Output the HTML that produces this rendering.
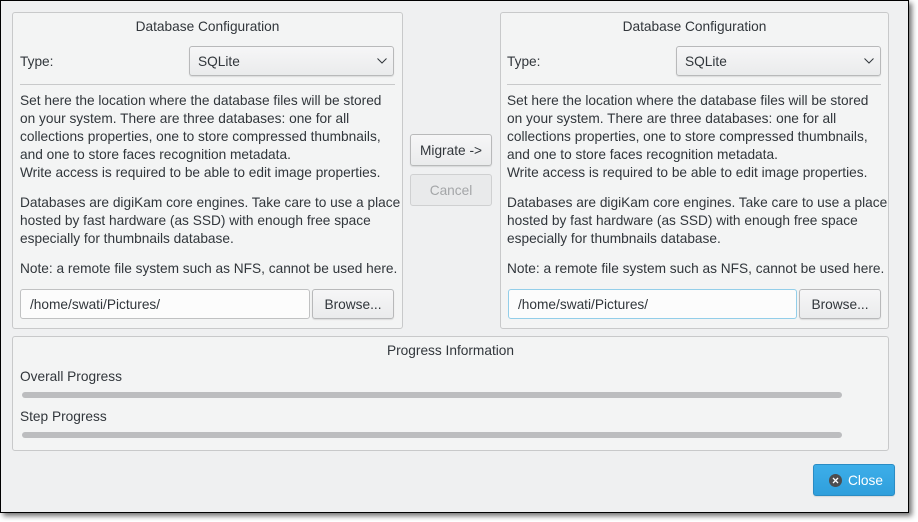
<!DOCTYPE html>
<html><head><meta charset="utf-8"><style>
*{box-sizing:border-box;margin:0;padding:0}
body{width:918px;height:522px;background:#fff;position:relative;overflow:hidden;font-family:"Liberation Sans",sans-serif;font-size:13.7px;color:#31363b}
.win{position:absolute;left:0;top:0;width:909px;height:513px;border:1px solid #000;background:#eff0f1;box-shadow:3px 3px 5px rgba(0,0,0,.55)}
.a{position:absolute;white-space:nowrap}
.grp{position:absolute;border:1px solid #c8c9ca;border-radius:3px;background:#f3f4f4}
.btn{position:absolute;border:1px solid #b8b9ba;border-radius:3px;background:linear-gradient(#f6f6f7,#eaebec);text-align:center;box-shadow:0 1px 1px rgba(0,0,0,.1)}
.inp{position:absolute;background:#fcfcfc;border:1px solid #c0c1c2;border-radius:3px;padding-left:9px}
.bar{position:absolute;height:6px;border-radius:3px;background:#bcbdbf}
</style></head><body>
<div class="win"></div>

<div class="grp" style="left:12px;top:12px;width:391px;height:317px"></div>
<div class="grp" style="left:500px;top:12px;width:389px;height:317px"></div>
<div class="grp" style="left:12px;top:336px;width:877px;height:115px"></div>

<!-- left -->
<div class="a" style="left:12px;width:391px;text-align:center;top:19px">Database Configuration</div>
<div class="a" style="left:20px;top:54px">Type:</div>
<div class="btn" style="left:189px;top:46px;width:205px;height:30px;text-align:left;padding:7px 0 0 8px">SQLite<svg style="position:absolute;right:6px;top:11px" width="10" height="6"><path d="M0.5 0.5L5 5L9.5 0.5" fill="none" stroke="#31363b"/></svg></div>
<div style="position:absolute;left:20px;top:84px;width:375px;height:1px;background:#c8c9ca"></div>
<div class="a" style="left:20px;top:92px;line-height:18px">Set here the location where the database files will be stored<br>on your system. There are three databases: one for all<br>collections properties, one to store compressed thumbnails,<br>and one to store faces recognition metadata.<br>Write access is required to be able to edit image properties.</div>
<div class="a" style="left:20px;top:194px;line-height:18px">Databases are digiKam core engines. Take care to use a place<br>hosted by fast hardware (as SSD) with enough free space<br>especially for thumbnails database.</div>
<div class="a" style="left:20px;top:260px;line-height:18px">Note: a remote file system such as NFS, cannot be used here.</div>
<div class="inp" style="left:20px;top:289px;width:290px;height:30px;padding-top:7px">/home/swati/Pictures/</div>
<div class="btn" style="left:312px;top:289px;width:82px;height:30px;padding-top:7px">Browse...</div>

<!-- right -->
<div class="a" style="left:500px;width:389px;text-align:center;top:19px">Database Configuration</div>
<div class="a" style="left:507px;top:54px">Type:</div>
<div class="btn" style="left:676px;top:46px;width:205px;height:30px;text-align:left;padding:7px 0 0 8px">SQLite<svg style="position:absolute;right:6px;top:11px" width="10" height="6"><path d="M0.5 0.5L5 5L9.5 0.5" fill="none" stroke="#31363b"/></svg></div>
<div style="position:absolute;left:507px;top:84px;width:374px;height:1px;background:#c8c9ca"></div>
<div class="a" style="left:507px;top:92px;line-height:18px">Set here the location where the database files will be stored<br>on your system. There are three databases: one for all<br>collections properties, one to store compressed thumbnails,<br>and one to store faces recognition metadata.<br>Write access is required to be able to edit image properties.</div>
<div class="a" style="left:507px;top:194px;line-height:18px">Databases are digiKam core engines. Take care to use a place<br>hosted by fast hardware (as SSD) with enough free space<br>especially for thumbnails database.</div>
<div class="a" style="left:507px;top:260px;line-height:18px">Note: a remote file system such as NFS, cannot be used here.</div>
<div class="inp" style="left:508px;top:289px;width:289px;height:30px;padding-top:7px;border-color:#93cee9">/home/swati/Pictures/</div>
<div class="btn" style="left:799px;top:289px;width:82px;height:30px;padding-top:7px">Browse...</div>

<!-- middle -->
<div class="btn" style="left:410px;top:134px;width:82px;height:32px;padding-top:8px">Migrate -&gt;</div>
<div class="btn" style="left:410px;top:174px;width:82px;height:32px;padding-top:8px;color:#a4a6a8;background:#e9eaeb;border-color:#cfd0d1;box-shadow:none">Cancel</div>

<!-- progress -->
<div class="a" style="left:12px;width:877px;text-align:center;top:343px">Progress Information</div>
<div class="a" style="left:20px;top:369px">Overall Progress</div>
<div class="bar" style="left:22px;top:392px;width:820px"></div>
<div class="a" style="left:20px;top:409px">Step Progress</div>
<div class="bar" style="left:22px;top:432px;width:820px"></div>

<div class="btn" style="left:813px;top:464px;width:82px;height:32px;padding:8px 0 0 34px;text-align:left;color:#fff;background:linear-gradient(#3daee9,#2f9fdc);border-color:#2a8cc4">Close
<svg style="position:absolute;left:15px;top:9px" width="13" height="13"><circle cx="6.5" cy="6.5" r="6.5" fill="#4d4d4f"/><path d="M4 4L9 9M9 4L4 9" stroke="#fff" stroke-width="1.3"/></svg></div>
</body></html>
